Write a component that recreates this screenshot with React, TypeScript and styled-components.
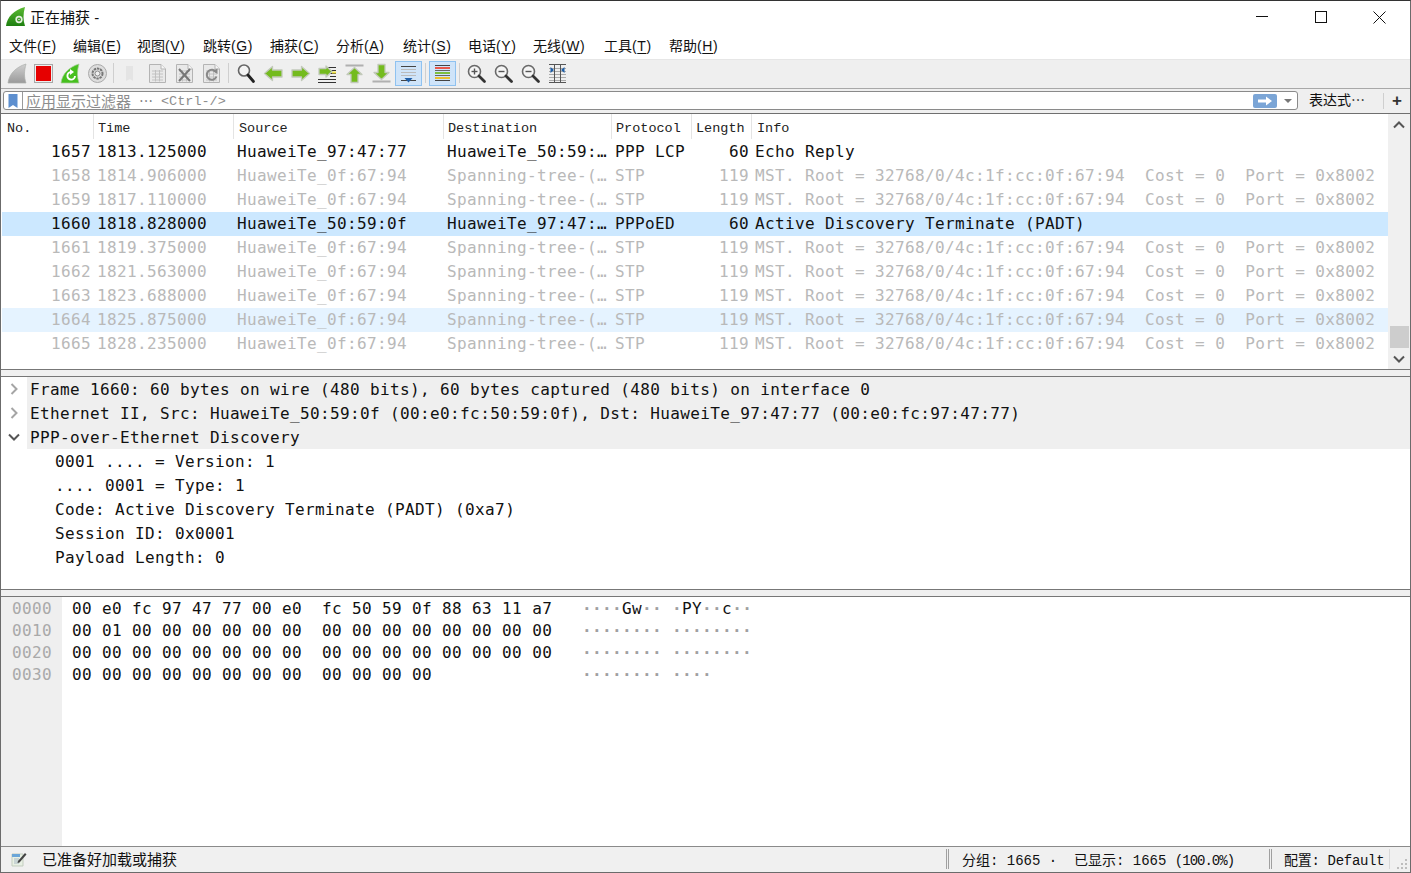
import React from "react";
import styled, { createGlobalStyle } from "styled-components";

const MONO = `"DejaVu Sans Mono", "Noto Sans CJK SC", monospace`;
const UI = `"Liberation Sans", "Noto Sans CJK SC", sans-serif`;
const CJK = `"Noto Sans CJK SC", sans-serif`;
const SMALLMONO = `"Liberation Mono", "Noto Sans CJK SC", monospace`;

const Global = createGlobalStyle`
  html, body { margin: 0; padding: 0; background: #fff; }
  #root { width: 1411px; height: 873px; }
`;

const Win = styled.div`
  box-sizing: border-box;
  width: 1411px;
  height: 873px;
  display: flex;
  flex-direction: column;
  overflow: hidden;
  background: #fff;
  border: 1px solid #6b6b6b;
  border-top-color: #333;
  font-family: ${UI};
  color: #111;
`;
const TitleBar = styled.div`
  height: 30px;
  flex: none;
  display: flex;
  align-items: center;
  padding-left: 4px;
  font-size: 15px;
`;
const TitleText = styled.span`
  margin-left: 5px;
  flex: 1;
`;
const WinBtn = styled.div`
  box-sizing: border-box;
  width: 59px;
  height: 30px;
  padding-top: 2px;
  display: flex;
  align-items: center;
  justify-content: center;
`;
const WinBtns = styled.div`
  display: flex;
  margin-right: 1px;
`;
const MenuBar = styled.div`
  height: 27px;
  flex: none;
  display: flex;
  align-items: center;
  padding: 0 0 1px 8px;
  font-size: 14px;
  border-bottom: 1px solid #e6e6e6;
`;
const MenuItem = styled.span<{ $w: number }>`
  width: ${(p) => p.$w}px;
  flex: none;
  u { text-underline-offset: 2px; }
`;
const MenuKey = styled.span`
  letter-spacing: 0.6px;
`;
const Toolbar = styled.div`
  height: 26px;
  flex: none;
  display: flex;
  align-items: center;
  padding: 0 0 2px 2px;
  background: #efefef;
  border-bottom: 1px solid #a8a8a8;
`;
const ToolBtn = styled.div<{ $on?: boolean }>`
  box-sizing: border-box;
  width: 27px;
  height: 25px;
  flex: none;
  display: flex;
  align-items: center;
  justify-content: center;
  ${(p) => (p.$on ? "background:#cfe4f9;border:1px solid #8fc2f0;" : "")}
`;
const ToolSep = styled.div<{ $l: number; $r: number }>`
  width: 1px;
  height: 20px;
  flex: none;
  background: #cfcfcf;
  margin: 0 ${(p) => p.$r}px 0 ${(p) => p.$l}px;
`;
const FilterBar = styled.div`
  height: 25px;
  flex: none;
  box-sizing: border-box;
  display: flex;
  align-items: center;
  padding: 0 0 1px 2px;
  background: #efefef;
  border-bottom: 1px solid #6f6f6f;
`;
const FilterBox = styled.div`
  box-sizing: border-box;
  width: 1295px;
  height: 19px;
  flex: none;
  display: flex;
  align-items: center;
  background: #fff;
  border: 1px solid #8a8a8a;
  border-radius: 3px;
`;
const Bookmark = styled.div`
  width: 18px;
  height: 17px;
  flex: none;
  display: flex;
  align-items: center;
  justify-content: center;
  border-right: 1px solid #9a9a9a;
`;
const Placeholder = styled.div`
  flex: 1;
  margin-left: 3px;
  font-family: ${SMALLMONO};
  font-size: 13.5px;
  color: #8d8d8d;
  white-space: pre;
  display: flex;
  align-items: center;
`;
const PlaceCjk = styled.span`
  font-family: ${CJK};
  font-size: 15px;
  line-height: 17px;
`;
const PlaceDots = styled.span`
  font-family: ${CJK};
  font-size: 14px;
  line-height: 17px;
  color: #666;
  margin: 0 8px;
`;
const PlaceHint = styled.span`
  margin-top: 2px;
`;
const ApplyBtn = styled.div`
  width: 24px;
  height: 14px;
  flex: none;
  display: flex;
  align-items: center;
  justify-content: center;
  background: #7ba5d6;
  border-radius: 2px;
`;
const DropArrow = styled.div`
  width: 0;
  height: 0;
  flex: none;
  margin: 0 5px 0 7px;
  border-left: 4px solid transparent;
  border-right: 4px solid transparent;
  border-top: 4px solid #777;
`;
const ExprBtn = styled.div`
  margin: 0 0 3px 11px;
  width: 74px;
  flex: none;
  font-family: ${CJK};
  font-size: 14px;
  line-height: 18px;
`;
const ExprSep = styled.div`
  width: 1px;
  height: 16px;
  flex: none;
  background: #cfcfcf;
`;
const PlusBtn = styled.div`
  flex: 1;
  text-align: center;
  font-size: 17px;
  font-weight: bold;
  line-height: 17px;
  color: #333;
`;
const ListPane = styled.div`
  height: 255px;
  flex: none;
  display: flex;
  padding-left: 1px;
  border-bottom: 1px solid #777;
`;
const ListBody = styled.div`
  flex: 1;
  min-width: 0;
  overflow: hidden;
`;
const HeadRow = styled.div`
  height: 26px;
  display: flex;
  align-items: flex-start;
  font-family: ${SMALLMONO};
  font-size: 13.5px;
  color: #222;
`;
const HeadCell = styled.div<{ $w: number; $pad: number }>`
  box-sizing: border-box;
  width: ${(p) => p.$w}px;
  height: 25px;
  line-height: 29px;
  flex: none;
  padding-left: ${(p) => p.$pad}px;
  border-right: 1px solid #e4e4e4;
  &:last-child { border-right: none; }
`;
const Row = styled.div<{ $bg?: string; $dim?: boolean }>`
  height: 24px;
  display: flex;
  background: ${(p) => p.$bg || "transparent"};
  color: ${(p) => (p.$dim ? "#b9b9b9" : "#111")};
  font-family: ${MONO};
  font-size: 16px;
  letter-spacing: 0.37px;
  line-height: 24px;
  white-space: pre;
`;
const Cell = styled.div<{ $w?: number; $right?: boolean }>`
  box-sizing: border-box;
  ${(p) => (p.$w ? `width:${p.$w}px;flex:none;` : "flex:1;")}
  overflow: hidden;
  ${(p) => (p.$right ? "text-align:right;padding-right:3px;" : "padding-left:3px;")}
`;
const ScrollBar = styled.div`
  width: 22px;
  flex: none;
  display: flex;
  flex-direction: column;
  align-items: center;
  background: #f0f0f0;
`;
const ScrollTrack = styled.div`
  flex: 1;
  width: 100%;
  display: flex;
  flex-direction: column;
  justify-content: flex-end;
  align-items: center;
`;
const ScrollThumb = styled.div`
  width: 19px;
  height: 22px;
  background: #cdcdcd;
`;
const ScrollEnd = styled.div`
  height: 21px;
  flex: none;
  display: flex;
  align-items: center;
  justify-content: center;
`;
const Sash = styled.div`
  height: 6px;
  flex: none;
  background: #f0f0f0;
  border-bottom: 1px solid #777;
`;
const DetailPane = styled.div`
  height: 212px;
  flex: none;
  border-bottom: 1px solid #777;
  font-family: ${MONO};
  font-size: 16px;
  letter-spacing: 0.37px;
  line-height: 26px;
  white-space: pre;
`;
const TreeRow = styled.div<{ $head?: boolean }>`
  height: 24px;
  display: flex;
  padding-left: ${(p) => (p.$head ? 0 : 54)}px;
`;
const Twisty = styled.div`
  width: 26px;
  flex: none;
  height: 24px;
  display: flex;
  align-items: center;
  justify-content: center;
  background: #fff;
`;
const TreeLabel = styled.div`
  flex: 1;
  height: 24px;
  padding-left: 3px;
  background: #efefef;
`;
const HexPane = styled.div`
  flex: 1;
  min-height: 0;
  display: flex;
  font-family: ${MONO};
  font-size: 16px;
  letter-spacing: 0.37px;
  white-space: pre;
`;
const Gutter = styled.div`
  width: 61px;
  flex: none;
  box-sizing: border-box;
  padding: 0 0 0 11px;
  background: #efefef;
  color: #a9a9a9;
`;
const HexLine = styled.div`
  height: 22px;
  line-height: 24px;
`;
const HexBytes = styled.div`
  flex: none;
  padding-left: 10px;
  width: 520px;
  box-sizing: border-box;
`;
const Ascii = styled.div`
  flex: 1;
`;
const Dim = styled.span`
  color: #a0a0a0;
  font-weight: bold;
`;
const StatusBar = styled.div`
  height: 26px;
  flex: none;
  box-sizing: border-box;
  display: flex;
  align-items: center;
  padding-bottom: 2px;
  background: #f0f0f0;
  border-top: 1px solid #8a8a8a;
  font-family: ${SMALLMONO};
  font-size: 14px;
  white-space: pre;
`;
const StatusIcon = styled.div`
  width: 41px;
  flex: none;
  padding-left: 10px;
  box-sizing: border-box;
  display: flex;
`;
const StatusMsg = styled.div`
  width: 904px;
  flex: none;
  font-family: ${CJK};
  font-size: 15px;
  line-height: 20px;
`;
const Grip = styled.div`
  width: 3px;
  height: 20px;
  flex: none;
  box-sizing: border-box;
  border-left: 1px solid #a0a0a0;
  border-right: 1px solid #a0a0a0;
`;
const StatusStats = styled.div`
  width: 320px;
  flex: none;
  padding-left: 13px;
  box-sizing: border-box;
`;
const Percent = styled.span`
  letter-spacing: -1px;
`;
const StatusProfile = styled.div`
  flex: none;
  width: 117px;
  padding-left: 12px;
  box-sizing: border-box;
  letter-spacing: -0.3px;
`;
const StatusSep = styled.div`
  width: 1px;
  height: 20px;
  flex: none;
  background: #d8d8d8;
`;
const SizeGrip = styled.div`
  flex: 1;
  align-self: flex-end;
  display: flex;
  justify-content: flex-end;
  padding-right: 1px;
  margin-bottom: -1px;
`;

const Fin = ({ id, a, b }: { id: string; a: string; b: string }) => (
  <svg width="20" height="21" viewBox="0 0 20 21">
    <defs>
      <linearGradient id={id} x1="0" y1="0" x2="0" y2="1">
        <stop offset="0" stopColor={a} />
        <stop offset="1" stopColor={b} />
      </linearGradient>
    </defs>
    <path d="M1 20C2 11 9 4 19 1C17 8 17 14 19 20Z" fill={`url(#${id})`} stroke="#aeb0ae" strokeWidth="0.7" />
  </svg>
);
const AppLogo = () => (
  <svg width="20" height="19" viewBox="0 0 20 19">
    <defs>
      <linearGradient id="lg" x1="0" y1="0" x2="0" y2="1">
        <stop offset="0" stopColor="#5cbc33" />
        <stop offset="1" stopColor="#1d7f10" />
      </linearGradient>
    </defs>
    <path d="M1 19C2 10 9 3 20 0C18 7 18 13 20 19Z" fill="url(#lg)" />
    <circle cx="14" cy="12.500" r="2.800" fill="none" stroke="#e4f0e0" strokeWidth="1.700" />
    <circle cx="14" cy="12.500" r="0.800" fill="#e4f0e0" />
  </svg>
);
const Svg = ({ children }: { children: React.ReactNode }) => (
  <svg width="21" height="21" viewBox="0 0 21 21">{children}</svg>
);
const Doc = () => (
  <g>
    <path d="M2.500 1.500H14L18.500 6V19.500H2.500Z" fill="#e9e9e9" stroke="#b4b4b4" />
    <path d="M14 1.500V6H18.500" fill="#f7f7f7" stroke="#b4b4b4" />
    <path d="M5 8H16M5 11H16M5 14H16M5 17H16M8.500 7V18.500M12.500 7V18.500" stroke="#bdbdbd" strokeWidth="0.9" />
  </g>
);
const GArrow = ({ d }: { d: string }) => (
  <path d={d} fill="#74bb1e" stroke="#c2c9ba" strokeWidth="1.300" strokeLinejoin="round" />
);
const Lens = ({ sign }: { sign?: "+" | "-" }) => (
  <>
    <circle cx="8.500" cy="8.500" r="6" fill="#f5f5f5" stroke="#6a6a6a" strokeWidth="1.600" />
    <path d="M13 13L18.500 18.500" stroke="#333" strokeWidth="2.800" strokeLinecap="round" />
    {sign && <path d="M5.500 8.500H11.500" stroke="#555" strokeWidth="1.400" />}
    {sign === "+" && <path d="M8.500 5.500V11.500" stroke="#555" strokeWidth="1.400" />}
  </>
);

const tools1 = [
  <Fin id="fgray" a="#d0d0d0" b="#9a9a9a" />,
  <Svg><rect x="1.500" y="1.500" width="18" height="18" fill="#eee" stroke="#a8a8a8" /><rect x="3" y="3" width="15" height="15" fill="#e60000" /></Svg>,
  <Svg>
    <path d="M1 20C2 11 9 4 19 1C17 8 17 14 19 20Z" fill="#46c01e" stroke="#a9cf9c" strokeWidth="0.7" />
    <path d="M15 13A3.800 3.800 0 1 1 11 9" fill="none" stroke="#fff" strokeWidth="1.900" />
    <path d="M10 6L14 9L10 12Z" fill="#fff" />
  </Svg>,
  <Svg>
    <circle cx="10.500" cy="10.500" r="9" fill="#ddd" stroke="#aaa" />
    <circle cx="10.500" cy="10.500" r="5" fill="none" stroke="#777" strokeWidth="2" strokeDasharray="2.400 0.800" />
    <circle cx="10.500" cy="10.500" r="2.500" fill="#efefef" stroke="#888" />
  </Svg>,
];
const tools2 = [
  <Svg><path d="M6 3H13V18L10 16L6 18Z" fill="#e4e4e4" /></Svg>,
  <Svg><Doc /></Svg>,
  <Svg><Doc /><path d="M5 6L16 18M16 6L5 18" stroke="#777" strokeWidth="2" /></Svg>,
  <Svg><Doc /><path d="M15 9A5 5 0 1 0 15.500 13.500" fill="none" stroke="#888" strokeWidth="2" /><path d="M11.500 8L16.500 5.500V11Z" fill="#888" /></Svg>,
];
const tools3 = [
  <Svg><circle cx="8" cy="7.500" r="5.500" fill="#f4f4f4" stroke="#666" strokeWidth="1.600" /><path d="M12 12L17.500 18.500" stroke="#222" strokeWidth="2.800" strokeLinecap="round" /></Svg>,
  <Svg><GArrow d="M1.500 10.500L9.500 3.500V7H19V14H9.500V17.500Z" /></Svg>,
  <Svg><GArrow d="M19.500 10.500L11.500 3.500V7H2V14H11.500V17.500Z" /></Svg>,
  <Svg>
    <path d="M10 4.500H19M13 7.500H19M13 10.500H19M13 13.500H19M1 16.500H19M1 19.500H19" stroke="#333" strokeWidth="1" />
    <path d="M15 8.500h4v2h-4z" fill="#f2e34a" />
    <GArrow d="M15 8.500L9 3V5.500H2V11.500H9V14Z" />
  </Svg>,
  <Svg>
    <rect x="1.500" y="1.500" width="18" height="2" fill="#b0b0b0" />
    <GArrow d="M10.500 4.500L18 11.500H14V19.500H7V11.500H3Z" />
  </Svg>,
  <Svg>
    <rect x="1.500" y="17.500" width="18" height="2" fill="#b0b0b0" />
    <GArrow d="M10.500 16.500L18 9.500H14V1.500H7V9.500H3Z" />
  </Svg>,
];
const autoScroll = (
  <Svg>
    <rect x="3" y="3" width="15" height="1" fill="#444" />
    <path d="M3 6.500H18M3 9.500H18M3 12.500H18" stroke="#bbb" />
    <rect x="3" y="17" width="15" height="1" fill="#444" />
    <path d="M6.500 15H14.500L10.500 19.500Z" fill="#1f5fa8" />
  </Svg>
);
const coloring = (
  <Svg>
    <rect x="3" y="2" width="15" height="1" fill="#444" />
    <rect x="3" y="4" width="15" height="2" fill="#e8574a" />
    <rect x="3" y="7" width="15" height="1" fill="#666" />
    <rect x="3" y="9" width="15" height="2" fill="#7cc040" />
    <rect x="3" y="12" width="15" height="1" fill="#666" />
    <rect x="3" y="14" width="15" height="2" fill="#eac02e" />
    <rect x="3" y="17" width="15" height="1" fill="#444" />
  </Svg>
);
const tools4 = [
  <Svg><Lens sign="+" /></Svg>,
  <Svg><Lens sign="-" /></Svg>,
  <Svg><Lens sign="-" /></Svg>,
  <Svg>
    <path d="M2 5.500H19M2 8.500H19M2 11.500H19M2 14.500H19M2 17.500H19" stroke="#aaa" strokeWidth="1" />
    <path d="M2 1.500H19M2 19.500H19M7.500 1V20M13.500 1V20" stroke="#555" strokeWidth="1" fill="none" />
    <path d="M3.500 4V10L7 7ZM17.500 4V10L14 7Z" fill="#1f5fa8" />
  </Svg>,
];

const menus: [string, string, number][] = [
  ["文件", "F", 64],
  ["编辑", "E", 64],
  ["视图", "V", 66],
  ["跳转", "G", 67],
  ["捕获", "C", 66],
  ["分析", "A", 67],
  ["统计", "S", 65],
  ["电话", "Y", 65],
  ["无线", "W", 71],
  ["工具", "T", 65],
  ["帮助", "H", 60],
];

const cols = [92, 140, 210, 168, 80, 60];
const heads: [string, number][] = [
  ["No.", 5],
  ["Time", 4],
  ["Source", 5],
  ["Destination", 4],
  ["Protocol", 4],
  ["Length", 4],
  ["Info", 5],
];
const stpInfo = "MST. Root = 32768/0/4c:1f:cc:0f:67:94  Cost = 0  Port = 0x8002";
const stp = (no: number, t: string, bg?: string) => ({
  no, t, s: "HuaweiTe_0f:67:94", d: "Spanning-tree-(…", p: "STP", l: 119, i: stpInfo, dim: true, bg,
});
const rows = [
  { no: 1657, t: "1813.125000", s: "HuaweiTe_97:47:77", d: "HuaweiTe_50:59:…", p: "PPP LCP", l: 60, i: "Echo Reply", dim: false, bg: undefined as string | undefined },
  stp(1658, "1814.906000"),
  stp(1659, "1817.110000"),
  { no: 1660, t: "1818.828000", s: "HuaweiTe_50:59:0f", d: "HuaweiTe_97:47:…", p: "PPPoED", l: 60, i: "Active Discovery Terminate (PADT)", dim: false, bg: "#cce8ff" },
  stp(1661, "1819.375000"),
  stp(1662, "1821.563000"),
  stp(1663, "1823.688000"),
  stp(1664, "1825.875000", "#e5f3ff"),
  stp(1665, "1828.235000"),
];

const Chevron = ({ dir, color = "#a5a5a5" }: { dir: "r" | "d" | "u"; color?: string }) => (
  <svg width="12" height="12" viewBox="0 0 12 12">
    <path
      d={dir === "r" ? "M3.500 1L8.500 6L3.500 11" : dir === "d" ? "M1 3.500L6 8.500L11 3.500" : "M1 8.500L6 3.500L11 8.500"}
      fill="none"
      stroke={color}
      strokeWidth="2"
    />
  </svg>
);

const hex = [
  ["0000", "00 e0 fc 97 47 77 00 e0  fc 50 59 0f 88 63 11 a7", "····Gw·· ·PY··c··"],
  ["0010", "00 01 00 00 00 00 00 00  00 00 00 00 00 00 00 00", "········ ········"],
  ["0020", "00 00 00 00 00 00 00 00  00 00 00 00 00 00 00 00", "········ ········"],
  ["0030", "00 00 00 00 00 00 00 00  00 00 00 00", "········ ····"],
];
const asciiLine = (s: string) =>
  s.split(/(·+)/).map((part, i) => (part.startsWith("·") ? <Dim key={i}>{part}</Dim> : <span key={i}>{part}</span>));

export default function App() {
  return (
    <Win>
      <Global />
      <TitleBar>
        <AppLogo />
        <TitleText>正在捕获 -</TitleText>
        <WinBtns>
          <WinBtn>
            <svg width="12" height="12"><path d="M0 5.500H12" stroke="#111" /></svg>
          </WinBtn>
          <WinBtn>
            <svg width="12" height="12"><rect x="0.500" y="0.500" width="11" height="11" fill="none" stroke="#111" /></svg>
          </WinBtn>
          <WinBtn>
            <svg width="13" height="13"><path d="M0.500 0.500L12.500 12.500M12.500 0.500L0.500 12.500" stroke="#111" /></svg>
          </WinBtn>
        </WinBtns>
      </TitleBar>
      <MenuBar>
        {menus.map(([n, k, w]) => (
          <MenuItem key={k} $w={w}>
            {n}<MenuKey>(<u>{k}</u>)</MenuKey>
          </MenuItem>
        ))}
      </MenuBar>
      <Toolbar>
        {tools1.map((t, i) => <ToolBtn key={i}>{t}</ToolBtn>)}
        <ToolSep $l={2} $r={3} />
        {tools2.map((t, i) => <ToolBtn key={i}>{t}</ToolBtn>)}
        <ToolSep $l={3} $r={4} />
        {tools3.map((t, i) => <ToolBtn key={i}>{t}</ToolBtn>)}
        <ToolBtn $on>{autoScroll}</ToolBtn>
        <ToolSep $l={3} $r={3} />
        <ToolBtn $on>{coloring}</ToolBtn>
        <ToolSep $l={3} $r={3} />
        {tools4.map((t, i) => <ToolBtn key={i}>{t}</ToolBtn>)}
      </Toolbar>
      <FilterBar>
        <FilterBox>
          <Bookmark>
            <svg width="10" height="14" viewBox="0 0 10 14"><path d="M0.500 0H9.500V14L5 11L0.500 14Z" fill="#5d8fcf" /></svg>
          </Bookmark>
          <Placeholder>
            <PlaceCjk>应用显示过滤器</PlaceCjk>
            <PlaceDots>…</PlaceDots>
            <PlaceHint>&lt;Ctrl-/&gt;</PlaceHint>
          </Placeholder>
          <ApplyBtn>
            <svg width="16" height="10" viewBox="0 0 16 10"><path d="M1 3.500H9V0.500L15 5L9 9.500V6.500H1Z" fill="#fff" /></svg>
          </ApplyBtn>
          <DropArrow />
        </FilterBox>
        <ExprBtn>表达式…</ExprBtn>
        <ExprSep />
        <PlusBtn>+</PlusBtn>
      </FilterBar>
      <ListPane>
        <ListBody>
          <HeadRow>
            {heads.map(([h, p], i) => (
              <HeadCell key={h} $w={cols[i] ?? 640} $pad={p}>{h}</HeadCell>
            ))}
          </HeadRow>
          {rows.map((r) => (
            <Row key={r.no} $bg={r.bg} $dim={r.dim}>
              <Cell $w={cols[0]} $right>{r.no}</Cell>
              <Cell $w={cols[1]}>{r.t}</Cell>
              <Cell $w={cols[2]}>{r.s}</Cell>
              <Cell $w={cols[3]}>{r.d}</Cell>
              <Cell $w={cols[4]}>{r.p}</Cell>
              <Cell $w={cols[5]} $right>{r.l}</Cell>
              <Cell>{r.i}</Cell>
            </Row>
          ))}
        </ListBody>
        <ScrollBar>
          <ScrollEnd><Chevron dir="u" color="#555" /></ScrollEnd>
          <ScrollTrack><ScrollThumb /></ScrollTrack>
          <ScrollEnd><Chevron dir="d" color="#555" /></ScrollEnd>
        </ScrollBar>
      </ListPane>
      <Sash />
      <DetailPane>
        <TreeRow $head>
          <Twisty><Chevron dir="r" /></Twisty>
          <TreeLabel>Frame 1660: 60 bytes on wire (480 bits), 60 bytes captured (480 bits) on interface 0</TreeLabel>
        </TreeRow>
        <TreeRow $head>
          <Twisty><Chevron dir="r" /></Twisty>
          <TreeLabel>Ethernet II, Src: HuaweiTe_50:59:0f (00:e0:fc:50:59:0f), Dst: HuaweiTe_97:47:77 (00:e0:fc:97:47:77)</TreeLabel>
        </TreeRow>
        <TreeRow $head>
          <Twisty><Chevron dir="d" color="#555" /></Twisty>
          <TreeLabel>PPP-over-Ethernet Discovery</TreeLabel>
        </TreeRow>
        <TreeRow>0001 .... = Version: 1</TreeRow>
        <TreeRow>.... 0001 = Type: 1</TreeRow>
        <TreeRow>Code: Active Discovery Terminate (PADT) (0xa7)</TreeRow>
        <TreeRow>Session ID: 0x0001</TreeRow>
        <TreeRow>Payload Length: 0</TreeRow>
      </DetailPane>
      <Sash />
      <HexPane>
        <Gutter>{hex.map((h) => <HexLine key={h[0]}>{h[0]}</HexLine>)}</Gutter>
        <HexBytes>{hex.map((h) => <HexLine key={h[0]}>{h[1]}</HexLine>)}</HexBytes>
        <Ascii>{hex.map((h) => <HexLine key={h[0]}>{asciiLine(h[2])}</HexLine>)}</Ascii>
      </HexPane>
      <StatusBar>
        <StatusIcon>
          <svg width="16" height="16" viewBox="0 0 16 16">
            <path d="M1 3H12V15H1Z" fill="#e8f0e4" stroke="#c3cdbf" />
            <rect x="1" y="3" width="8" height="3" fill="#6aa5d8" />
            <path d="M3 8H8M3 10H8M3 12H8" stroke="#9ab" strokeWidth="0.800" />
            <path d="M7 10L14 2L15.500 3.500L8.500 11.500L6.500 12Z" fill="#444" />
          </svg>
        </StatusIcon>
        <StatusMsg>已准备好加载或捕获</StatusMsg>
        <Grip />
        <StatusStats>分组: 1665 ·  已显示: 1665 <Percent>(100.0%)</Percent></StatusStats>
        <Grip />
        <StatusProfile>配置: Default</StatusProfile>
        <StatusSep />
        <SizeGrip>
          <svg width="12" height="12" viewBox="0 0 12 12" fill="#bdbdbd">
            <rect x="8" y="0" width="2" height="2" />
            <rect x="4" y="4" width="2" height="2" /><rect x="8" y="4" width="2" height="2" />
            <rect x="0" y="8" width="2" height="2" /><rect x="4" y="8" width="2" height="2" /><rect x="8" y="8" width="2" height="2" />
          </svg>
        </SizeGrip>
      </StatusBar>
    </Win>
  );
}
